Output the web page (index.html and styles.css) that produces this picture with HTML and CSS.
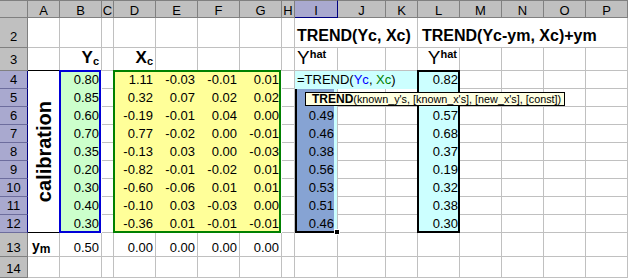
FILE: index.html
```html
<!DOCTYPE html>
<html>
<head>
<meta charset="utf-8">
<title>TREND</title>
<link rel="stylesheet" href="styles.css">
</head>
<body>
<div class="sheet">
  <div class="ch corner"></div>
  <div class="ch">A</div><div class="ch">B</div><div class="ch">C</div><div class="ch">D</div>
  <div class="ch">E</div><div class="ch">F</div><div class="ch">G</div><div class="ch">H</div>
  <div class="ch sel">I</div><div class="ch">J</div><div class="ch">K</div><div class="ch">L</div>
  <div class="ch">M</div><div class="ch">N</div><div class="ch">O</div><div class="ch">P</div>

  <div class="rh r2">2</div>
  <div class="c"></div><div class="c"></div><div class="c"></div><div class="c"></div>
  <div class="c"></div><div class="c"></div><div class="c"></div><div class="c"></div>
  <div class="title t1">TREND(Yc, Xc)</div>
  <div class="title t2">TREND(Yc-ym, Xc)+ym</div>

  <div class="rh r3">3</div>
  <div class="c"></div>
  <div class="c lb"><span>Y<sub>c</sub></span></div>
  <div class="c"></div>
  <div class="c lb"><span>X<sub>c</sub></span></div>
  <div class="c"></div><div class="c"></div><div class="c"></div><div class="c"></div>
  <div class="c yh left"><span>Y<b>hat</b></span></div>
  <div class="c"></div><div class="c"></div>
  <div class="c yh"><span>Y<b>hat</b></span></div>
  <div class="c"></div><div class="c"></div><div class="c"></div><div class="c"></div>

  <div class="merge-a"><span>calibration</span></div>
  <div class="rng rng-b">
    <div class="v">0.80</div><div class="v">0.85</div><div class="v">0.60</div>
    <div class="v">0.70</div><div class="v">0.35</div><div class="v">0.20</div>
    <div class="v">0.30</div><div class="v">0.40</div><div class="v">0.30</div>
  </div>
  <div class="rng rng-x">
    <div class="v">1.11</div><div class="v">-0.03</div><div class="v">-0.01</div><div class="v">0.01</div>
    <div class="v">0.32</div><div class="v">0.07</div><div class="v">0.02</div><div class="v">0.02</div>
    <div class="v">-0.19</div><div class="v">-0.01</div><div class="v">0.04</div><div class="v">0.00</div>
    <div class="v">0.77</div><div class="v">-0.02</div><div class="v">0.00</div><div class="v">-0.01</div>
    <div class="v">-0.13</div><div class="v">0.03</div><div class="v">0.00</div><div class="v">-0.03</div>
    <div class="v">-0.82</div><div class="v">-0.01</div><div class="v">-0.02</div><div class="v">0.01</div>
    <div class="v">-0.60</div><div class="v">-0.06</div><div class="v">0.01</div><div class="v">0.01</div>
    <div class="v">-0.10</div><div class="v">0.03</div><div class="v">-0.03</div><div class="v">0.00</div>
    <div class="v">-0.36</div><div class="v">0.01</div><div class="v">-0.01</div><div class="v">-0.01</div>
  </div>
  <div class="edit"><span>=TREND(<span class="ref-y">Yc</span>, <span class="ref-x">Xc</span>)</span></div>
  <div class="selcol">
    <div class="v"></div><div class="v">0.49</div><div class="v">0.46</div><div class="v">0.38</div>
    <div class="v">0.56</div><div class="v">0.53</div><div class="v">0.51</div><div class="v">0.46</div>
    <div class="handle"></div>
  </div>
  <div class="rng rng-l">
    <div class="v">0.82</div><div class="v"></div><div class="v">0.57</div>
    <div class="v">0.68</div><div class="v">0.37</div><div class="v">0.19</div>
    <div class="v">0.32</div><div class="v">0.38</div><div class="v">0.30</div>
  </div>

  <div class="rh sel">4</div>
  <div class="c"></div><div class="c"></div>
  <div class="c"></div><div class="c"></div><div class="c"></div><div class="c"></div>

  <div class="rh sel">5</div>
  <div class="c"></div><div class="c"></div><div class="c"></div><div class="c"></div>
  <div class="c"></div><div class="c"></div><div class="c"></div><div class="c"></div>
  <div class="rh sel">6</div>
  <div class="c"></div><div class="c"></div><div class="c"></div><div class="c"></div>
  <div class="c"></div><div class="c"></div><div class="c"></div><div class="c"></div>
  <div class="rh sel">7</div>
  <div class="c"></div><div class="c"></div><div class="c"></div><div class="c"></div>
  <div class="c"></div><div class="c"></div><div class="c"></div><div class="c"></div>
  <div class="rh sel">8</div>
  <div class="c"></div><div class="c"></div><div class="c"></div><div class="c"></div>
  <div class="c"></div><div class="c"></div><div class="c"></div><div class="c"></div>
  <div class="rh sel">9</div>
  <div class="c"></div><div class="c"></div><div class="c"></div><div class="c"></div>
  <div class="c"></div><div class="c"></div><div class="c"></div><div class="c"></div>
  <div class="rh sel">10</div>
  <div class="c"></div><div class="c"></div><div class="c"></div><div class="c"></div>
  <div class="c"></div><div class="c"></div><div class="c"></div><div class="c"></div>
  <div class="rh sel">11</div>
  <div class="c"></div><div class="c"></div><div class="c"></div><div class="c"></div>
  <div class="c"></div><div class="c"></div><div class="c"></div><div class="c"></div>
  <div class="rh sel">12</div>
  <div class="c"></div><div class="c"></div><div class="c"></div><div class="c"></div>
  <div class="c"></div><div class="c"></div><div class="c"></div><div class="c"></div>

  <div class="rh">13</div>
  <div class="c ym"><span>y<sub>m</sub></span></div>
  <div class="c">0.50</div>
  <div class="c"></div>
  <div class="c">0.00</div><div class="c">0.00</div><div class="c">0.00</div><div class="c">0.00</div>
  <div class="c"></div><div class="c"></div><div class="c"></div><div class="c"></div>
  <div class="c"></div><div class="c"></div><div class="c"></div><div class="c"></div><div class="c"></div>

  <div class="rh">14</div>
  <div class="c"></div><div class="c"></div><div class="c"></div><div class="c"></div>
  <div class="c"></div><div class="c"></div><div class="c"></div><div class="c"></div>
  <div class="c"></div><div class="c"></div><div class="c"></div><div class="c"></div>
  <div class="c"></div><div class="c"></div><div class="c"></div><div class="c"></div>

  <div class="tip"><b>TREND</b>(known_y's, [known_x's], [new_x's], [const])</div>
</div>
</body>
</html>
```

FILE: styles.css
```css
* { box-sizing: border-box; margin: 0; padding: 0; }

body {
  margin: 0;
  background: #ffffff;
  font-family: "Liberation Sans", Arial, sans-serif;
}

.sheet {
  position: relative;
  display: grid;
  grid-template-columns: 28px 32px 42px 12px 42px 42px 42px 42px 13px 43px 48px 32px 42px 42px 42px 42px 42px;
  grid-template-rows: 18px 30px 23px repeat(9, 18px) 24px 21px;
  width: 629px;
  font-size: 13px;
  line-height: 15px;
  color: #000;
}

/* column headers */
.ch {
  background: #c0c0c0;
  border-top: 1px solid #808080;
  border-right: 1px solid #808080;
  border-bottom: 1px solid #808080;
  display: flex;
  align-items: center;
  justify-content: center;
  padding-top: 3px;
}
.ch.sel {
  background: #a9a9cf;
  border-bottom-color: #000080;
  border-right-color: #000080;
}

/* row headers */
.rh {
  background: #c0c0c0;
  border-right: 1px solid #808080;
  border-bottom: 1px solid #808080;
  display: flex;
  align-items: flex-end;
  justify-content: center;
  padding-bottom: 1px;
}
.rh.r2, .rh.r3 { padding-bottom: 3px; }
.rh.sel {
  background: #a9a9cf;
  border-right-color: #000080;
  border-bottom-color: #6d6d9d;
}

/* ordinary cells */
.c {
  border-right: 1px solid #c0c0c0;
  border-bottom: 1px solid #c0c0c0;
  display: flex;
  align-items: flex-end;
  justify-content: flex-end;
  padding: 0 2px 1px 2px;
  white-space: nowrap;
  overflow: hidden;
}

.lb {
  font-weight: bold;
  font-size: 17px;
  line-height: 18px;
  padding-bottom: 3px;
}
.lb sub {
  font-size: 11px;
  vertical-align: -2px;
  line-height: 0;
}

.yh {
  font-size: 19px;
  line-height: 20px;
  padding-bottom: 2px;
  overflow: visible;
}
.yh.left { justify-content: flex-start; }
.yh b {
  font-size: 11px;
  vertical-align: 6px;
  line-height: 0;
}

.ym {
  justify-content: flex-start;
  padding-left: 4px;
  padding-bottom: 2px;
  font-weight: bold;
  font-size: 14px;
}
.ym sub {
  font-size: 12px;
  vertical-align: -2px;
  line-height: 0;
}

/* titles in row 2 */
.title {
  grid-row: 2;
  display: flex;
  align-items: flex-end;
  font-weight: bold;
  font-size: 16px;
  line-height: 18px;
  padding: 0 0 2px 2px;
  border-right: 1px solid #c0c0c0;
  border-bottom: 1px solid #c0c0c0;
  white-space: nowrap;
}
.t1 { grid-column: 10 / 13; }
.t2 { grid-column: 13 / 18; padding-left: 4px; }

/* merged A4:A12 */
.merge-a {
  grid-column: 2;
  grid-row: 4 / 13;
  background: #fff;
  border-right: 1px solid #000;
  border-bottom: 1px solid #000;
  box-shadow: 0 -1px 0 #000;
  display: flex;
  align-items: center;
  justify-content: center;
  z-index: 1;
}
.merge-a span {
  writing-mode: vertical-rl;
  transform: rotate(180deg);
  font-weight: bold;
  font-size: 20px;
  line-height: 22px;
}

/* value rows inside ranges */
.v {
  height: 18px;
  display: flex;
  align-items: flex-end;
  justify-content: flex-end;
  padding: 0 3px 2px 0;
  white-space: nowrap;
}

.rng {
  z-index: 2;
  margin: -1px 1px 0 -1px;
  padding: 1px 0 0 1px;
}
.rng-b {
  grid-column: 3;
  grid-row: 4 / 13;
  background: #ccffcc;
  box-shadow: inset 0 0 0 2px #0000d8;
}
.rng-b .v { padding-right: 2px; }

.rng-x {
  grid-column: 5 / 9;
  grid-row: 4 / 13;
  background: #ffff99;
  box-shadow: inset 0 0 0 2px #008000;
  display: grid;
  grid-template-columns: repeat(4, 42px);
  grid-auto-rows: 18px;
}

.rng-l {
  grid-column: 13;
  grid-row: 4 / 13;
  margin-right: 0;
  background: #ccffff;
  box-shadow: inset 0 0 0 2px #000;
}
.rng-l .v { padding-right: 2px; }

/* in-cell edit of I4 */
.edit {
  grid-column: 10 / 13;
  grid-row: 4;
  background: #ccffff;
  display: flex;
  align-items: flex-end;
  padding: 0 0 2px 2px;
  white-space: nowrap;
  z-index: 1;
}
.ref-y { color: #0000ff; }
.ref-x { color: #008000; }

/* selected I5:I12 */
.selcol {
  position: relative;
  grid-column: 10;
  grid-row: 5 / 13;
  border-left: 2px solid #000;
  border-bottom: 2px solid #000;
  border-right: 1px solid #c0c0c0;
  background: linear-gradient(to right, #86a3d3 0, #86a3d3 calc(100% - 3px), #ccffff calc(100% - 3px));
  z-index: 1;
}
.handle {
  position: absolute;
  right: -3px;
  bottom: -4px;
  width: 6px;
  height: 6px;
  background: #000;
  border: 1px solid #fff;
}

/* function tooltip */
.tip {
  position: absolute;
  left: 305px;
  top: 92px;
  width: 260px;
  height: 14px;
  background: #ffffe1;
  border: 1px solid #000;
  font-size: 10.8px;
  line-height: 12px;
  padding-left: 6px;
  white-space: nowrap;
  z-index: 5;
}
.tip b { font-size: 12px; }
```
